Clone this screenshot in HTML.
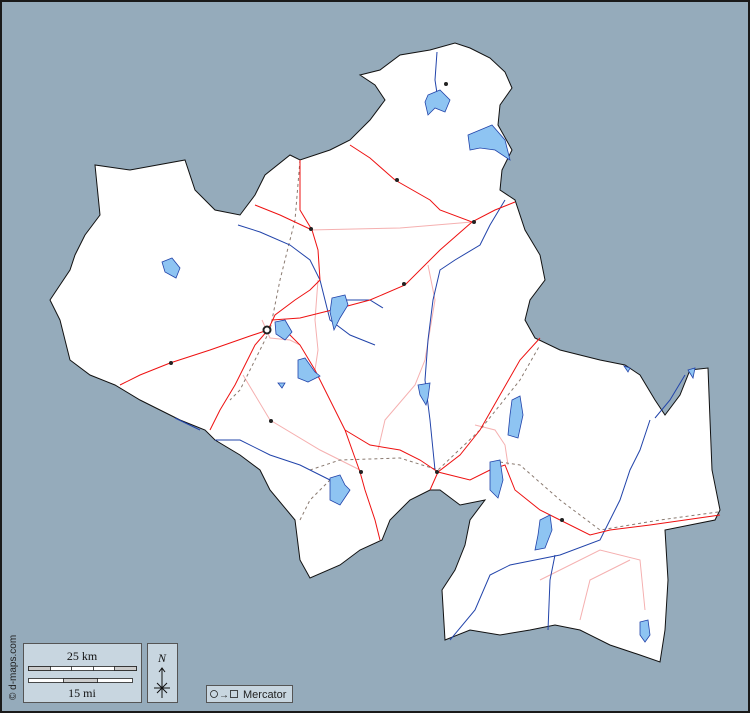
<!DOCTYPE html>
<html><head><meta charset="utf-8"><style>
html,body{margin:0;padding:0;}
body{width:750px;height:713px;overflow:hidden;background:#95abbb;}
svg{display:block;}
</style></head><body>
<svg width="750" height="713" viewBox="0 0 750 713" xmlns="http://www.w3.org/2000/svg">
<rect x="1" y="1" width="748" height="711" fill="#95abbb" stroke="#1a1a1a" stroke-width="2"/>
<polygon fill="#fff" stroke="#111" stroke-width="1" points="360,75 380,70 400,55 430,50 455,43 470,48 490,58 505,72 512,88 500,105 498,125 512,150 502,170 500,190 515,200 525,230 540,255 545,280 530,300 525,320 535,338 560,350 600,360 625,365 640,375 655,400 665,415 680,395 690,370 708,368 710,420 712,470 720,510 715,520 690,525 665,530 668,580 665,630 660,662 640,655 610,645 580,630 555,625 530,630 500,635 470,630 445,640 442,590 455,570 465,545 470,520 485,500 460,505 440,490 430,490 410,500 390,520 382,540 360,550 340,565 310,578 300,560 295,520 270,490 260,470 240,455 215,440 205,430 180,420 140,400 115,385 90,375 70,360 60,320 50,300 60,285 70,270 75,255 85,235 100,215 95,165 130,170 185,160 195,190 215,210 240,215 255,195 265,175 290,155 300,160 330,150 350,140 370,120 385,100 375,85"/>
<g fill="none" stroke-width="1">
<g stroke="#f5b0b0">
<path d="M310,230 L400,228 L472,222"/>
<path d="M428,265 L435,300 L425,360 L415,385 L385,420 L378,450"/>
<path d="M318,280 L315,320 L318,350 L315,370"/>
<path d="M243,375 L270,420 L320,450 L360,470"/>
<path d="M262,320 L270,338 L290,340 L300,345"/>
<path d="M475,425 L495,430 L505,445 L508,465"/>
<path d="M540,580 L600,550 L640,560 L645,610"/>
<path d="M580,620 L590,580 L630,560"/>
</g>
<g stroke="#8a7a70" stroke-dasharray="3,3">
<path d="M300,160 L295,220 L280,280 L270,330 L240,390 L230,400"/>
<path d="M310,470 L340,460 L400,458 L438,470 L480,430 L520,380 L540,345"/>
<path d="M500,462 L520,465 L560,500 L600,530 L660,520 L718,512"/>
<path d="M300,520 L310,500 L330,480"/>
</g>
<g stroke="#2244aa">
<path d="M437,52 L435,80 L438,100"/>
<path d="M238,225 L260,232 L290,245 L310,260 L320,280 L325,300 L330,320 L350,335 L375,345"/>
<path d="M345,300 L370,300 L383,308"/>
<path d="M505,200 L490,225 L480,245 L455,260 L440,270 L433,300 L428,340 L425,380 L430,420 L435,470"/>
<path d="M650,420 L640,450 L630,470 L620,500 L600,540 L560,555 L510,565 L490,575 L475,610 L450,640"/>
<path d="M555,555 L550,580 L548,630"/>
<path d="M685,375 L670,400 L655,418"/>
<path d="M215,440 L240,440 L270,455 L300,465 L330,480"/>
<path d="M175,418 L200,430"/>
</g>
<g stroke="#ee1111">
<path d="M350,145 L370,158 L395,180 L430,200 L440,210 L472,222 L495,210 L515,202"/>
<path d="M300,160 L300,210 L312,230 L318,250 L320,280 L310,290 L295,300 L275,315 L268,330"/>
<path d="M255,205 L280,215 L312,230"/>
<path d="M472,222 L440,250 L405,285 L370,300 L340,308 L300,318 L272,320"/>
<path d="M120,385 L140,375 L170,363 L210,350 L250,336 L268,330"/>
<path d="M268,330 L255,345 L245,365 L235,385 L220,410 L210,430"/>
<path d="M285,330 L300,345 L315,370 L325,390 L340,420 L345,430 L360,472 L365,490 L375,520 L380,540"/>
<path d="M345,430 L370,445 L400,450 L420,460 L438,472 L470,480 L490,470 L505,465 L515,490 L540,510 L560,520 L590,535 L610,530 L650,525 L720,515"/>
<path d="M540,338 L520,360 L500,395 L480,430 L460,455 L438,472 L430,490"/>
</g>
</g>
<g fill="#8ec4f2" stroke="#2244aa" stroke-width="0.8">
<path d="M428,95 L440,90 L450,100 L445,112 L435,108 L428,115 L425,102Z"/>
<path d="M468,135 L480,130 L492,125 L505,140 L510,160 L495,150 L480,148 L470,150Z"/>
<path d="M162,262 L172,258 L180,268 L176,278 L165,272Z"/>
<path d="M332,298 L345,295 L348,305 L340,318 L334,330 L330,312Z"/>
<path d="M275,322 L285,320 L292,332 L285,340 L276,334Z"/>
<path d="M298,360 L305,358 L315,372 L320,376 L308,382 L298,378Z"/>
<path d="M278,383 L285,383 L282,388Z"/>
<path d="M418,385 L430,383 L428,398 L426,405 L420,395Z"/>
<path d="M512,400 L520,396 L523,415 L518,438 L508,435 L510,415Z"/>
<path d="M490,462 L500,460 L503,480 L498,498 L490,490Z"/>
<path d="M330,478 L340,475 L345,485 L350,490 L340,505 L330,500Z"/>
<path d="M540,520 L550,515 L552,530 L545,548 L535,550 L538,535Z"/>
<path d="M640,622 L648,620 L650,635 L645,642 L640,635Z"/>
<path d="M688,370 L695,368 L693,378Z"/>
<path d="M624,366 L630,368 L628,372Z"/>
</g>
<g fill="#222">
<circle cx="446" cy="84" r="2"/><circle cx="397" cy="180" r="2"/><circle cx="474" cy="222" r="2"/>
<circle cx="311" cy="229" r="2"/><circle cx="404" cy="284" r="2"/><circle cx="171" cy="363" r="2"/>
<circle cx="271" cy="421" r="2"/><circle cx="361" cy="472" r="2"/><circle cx="437" cy="472" r="2"/>
<circle cx="562" cy="520" r="2"/>
</g>
<circle cx="267" cy="330" r="3.5" fill="#fff" stroke="#222" stroke-width="2"/>
<text transform="translate(16,700) rotate(-90)" font-family="Liberation Sans, sans-serif" font-size="10" fill="#222">© d-maps.com</text>
<rect x="23.5" y="643.5" width="118" height="59" fill="#c8d6e0" stroke="#555"/>
<text x="82" y="660" text-anchor="middle" font-family="Liberation Serif, serif" font-size="12" fill="#111">25 km</text>
<rect x="28.5" y="666.5" width="108" height="4" fill="#fff" stroke="#222" stroke-width="0.8"/>
<rect x="28.5" y="666.5" width="22" height="4" fill="#ccc" stroke="#222" stroke-width="0.8"/>
<rect x="114.5" y="666.5" width="22" height="4" fill="#ccc" stroke="#222" stroke-width="0.8"/>
<path d="M71.5,666.5 V670.5 M93.5,666.5 V670.5" stroke="#222" stroke-width="0.8"/>
<rect x="28.5" y="678.5" width="104" height="4" fill="#fff" stroke="#222" stroke-width="0.8"/>
<rect x="63.5" y="678.5" width="34" height="4" fill="#ccc" stroke="#222" stroke-width="0.8"/>
<text x="82" y="697" text-anchor="middle" font-family="Liberation Serif, serif" font-size="12" fill="#111">15 mi</text>
<rect x="147.5" y="643.5" width="30" height="59" fill="#c8d6e0" stroke="#555"/>
<text x="162" y="662" text-anchor="middle" font-family="Liberation Serif, serif" font-style="italic" font-size="12" fill="#111">N</text>
<path d="M162,668 L162,698 M159,672 L162,668 L165,672 M154,688 L170,688 M157,683 L167,693 M167,683 L157,693" stroke="#111" stroke-width="1" fill="none"/>
<rect x="206.5" y="685.5" width="86" height="17" fill="#c8d6e0" stroke="#555"/>
<circle cx="214" cy="694" r="3.5" fill="none" stroke="#222" stroke-width="0.8"/>
<text x="219" y="698" font-family="Liberation Sans, sans-serif" font-size="10" fill="#222">→</text>
<rect x="230.5" y="690.5" width="7" height="7" fill="none" stroke="#222" stroke-width="0.8"/>
<text x="243" y="698" font-family="Liberation Sans, sans-serif" font-size="11" fill="#222">Mercator</text>
</svg>
</body></html>
